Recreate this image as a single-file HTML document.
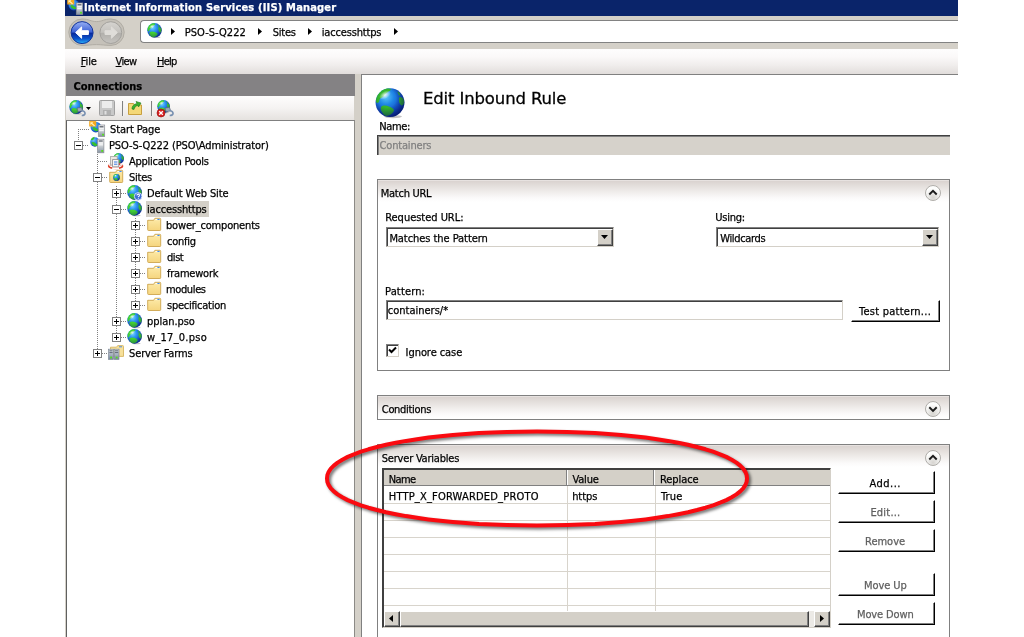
<!DOCTYPE html>
<html lang="en"><head><meta charset="utf-8"><title>Internet Information Services (IIS) Manager</title>
<style>

html,body{margin:0;padding:0;background:#fff;}
body{width:1024px;height:637px;overflow:hidden;position:relative;font-family:"DejaVu Sans Condensed","Liberation Sans",sans-serif;font-size:11px;}
.a{position:absolute;box-sizing:border-box;}
.tx{position:absolute;left:0;top:0;width:1024px;height:637px;will-change:transform;}
.t{position:absolute;white-space:pre;-webkit-text-stroke:0.25px;}
svg{position:absolute;overflow:visible;}
u{text-decoration:underline;text-underline-offset:1px;}
.hd{background:linear-gradient(#f4f1f0 0,#dad3d0 1px,#e4dfdc 6px,#f0edeb 12px,#fbfafa 18px,#fff 22px);}
.btn{background:#fff;border:1px solid #fff;border-right-color:#000;border-bottom-color:#000;box-shadow:inset -1px -1px 0 #808080;}
.sunk{border:1px solid #808080;border-right-color:#d4d0c8;border-bottom-color:#d4d0c8;box-shadow:inset 1px 1px 0 #404040;background:#fff;}
.dd{background:#d4d0c8;border:1px solid #fff;border-right-color:#404040;border-bottom-color:#404040;box-shadow:inset -1px -1px 0 #808080;}
.dv{background-image:linear-gradient(#808080 50%,transparent 50%);background-size:1px 2px;width:1px;}
.dh{background-image:linear-gradient(90deg,#808080 50%,transparent 50%);background-size:2px 1px;height:1px;}
.pm{width:9px;height:9px;border:1px solid #808080;background:#fff;}
.pm i{position:absolute;left:1px;top:3px;width:5px;height:1px;background:#000;}
.pm b{position:absolute;left:3px;top:1px;width:1px;height:5px;background:#000;}
</style></head>
<body>
<div class="a" style="left:65px;top:0px;width:893px;height:637px;background:#d4d0c8;"></div>
<div class="a" style="left:65px;top:0px;width:893px;height:16px;background:#0a246a;"></div>
<svg style="left:67px;top:-1px" width="16" height="16" viewBox="0 0 16 16"><defs><radialGradient id="g1" cx="0.35" cy="0.3" r="0.8"><stop offset="0" stop-color="#6cc8f8"/><stop offset="0.6" stop-color="#1c6ee0"/><stop offset="1" stop-color="#1038a8"/></radialGradient><linearGradient id="g1t" x1="0" y1="0" x2="0" y2="1"><stop offset="0" stop-color="#f4f4f4"/><stop offset="0.45" stop-color="#d0d4d8"/><stop offset="1" stop-color="#8492a2"/></linearGradient></defs><circle cx="6.8" cy="6.1" r="5.3" fill="url(#g1)"/><path d="M3.2 6.7 q1.6 -1.4 3.4 0 q1.8 1.6 3.2 2.2 q-1.2 1.6 -3 1.4 q-2.6 -0.6 -3.6 -3.6z M2.6 3.7 q1.2 -2.4 3.8 -2.8 q0.4 1.6 -1 2.6 q-1.2 1.4 -2.8 0.2z" fill="#36c030"/><rect x="9.3" y="4" width="6.4" height="11.6" fill="url(#g1t)" stroke="#8a8e96" stroke-width="0.7"/><rect x="10.5" y="5.3" width="4.0" height="1" fill="#3c4450"/><rect x="10.3" y="7.4" width="4.4" height="0.9" fill="#fff"/><rect x="10.3" y="9.2" width="4.4" height="0.9" fill="#fff"/><rect x="13.1" y="12.8" width="1.8" height="1.8" fill="#54e018"/><rect x="0.2" y="0.1" width="7" height="5.4" fill="#f5a81c"/><path d="M1.4 1.2 h3 l-1 1 l2.6 2.2 l-0.9 0.9 l-2.6 -2.2 l-1.1 1z" fill="#fff3c0"/></svg>
<svg style="left:68px;top:18px" width="58" height="30" viewBox="0 0 58 30">
<defs>
<linearGradient id="bk" x1="0" y1="0" x2="0" y2="1"><stop offset="0" stop-color="#98b0f4"/><stop offset="0.46" stop-color="#3f63d6"/><stop offset="0.54" stop-color="#0a2c9e"/><stop offset="0.78" stop-color="#0a54cc"/><stop offset="1" stop-color="#2cb4fa"/></linearGradient>
<linearGradient id="fw" x1="0" y1="0" x2="0" y2="1"><stop offset="0" stop-color="#d6d4d0"/><stop offset="0.48" stop-color="#c4c2be"/><stop offset="0.54" stop-color="#b2b0ac"/><stop offset="1" stop-color="#c6c4c0"/></linearGradient>
</defs>
<path d="M14 1 C21 1 23 3.6 28.5 3.6 C34 3.6 36 1 43 1 A13.2 13.2 0 0 1 43 27.4 C37 27.4 34 26.6 28.5 26.6 C23 26.6 20 27.4 14 27.4 A13.2 13.2 0 0 1 14 1Z" fill="#c5c1b9" stroke="#b0aca4" stroke-width="1"/>
<circle cx="14.1" cy="14.6" r="11" fill="url(#bk)" stroke="#12349a" stroke-width="1"/>
<path d="M7.6 14.6 L13.6 8.9 L13.6 12.7 L20.4 12.7 L20.4 16.5 L13.6 16.5 L13.6 20.3Z" fill="#fff" stroke="#fff" stroke-width="1" stroke-linejoin="round"/>
<circle cx="42.8" cy="14.6" r="10.9" fill="url(#fw)" stroke="#a3a19d" stroke-width="1"/>
<path d="M49.4 14.6 L43.4 8.9 L43.4 12.7 L37 12.7 L37 16.5 L43.4 16.5 L43.4 20.3Z" fill="#dfddd9" stroke="#dfddd9" stroke-width="1" stroke-linejoin="round"/>
</svg>
<div class="a" style="left:140px;top:20px;width:818px;height:23px;background:#fff;border:1px solid #828282;border-right:0;border-radius:4px 0 0 4px;"></div>
<svg style="left:147px;top:22.5px" width="15" height="15" viewBox="0 0 30 30"><defs><radialGradient id="g2" cx="0.36" cy="0.3" r="0.78"><stop offset="0" stop-color="#7cd8ff"/><stop offset="0.35" stop-color="#2c96f2"/><stop offset="0.7" stop-color="#1a60d8"/><stop offset="1" stop-color="#1436a8"/></radialGradient><radialGradient id="g2h" cx="0.5" cy="0.5" r="0.5"><stop offset="0" stop-color="#fff" stop-opacity="0.9"/><stop offset="1" stop-color="#fff" stop-opacity="0"/></radialGradient><radialGradient id="g2s" cx="0.4" cy="0.36" r="0.68"><stop offset="0.45" stop-color="#001060" stop-opacity="0"/><stop offset="1" stop-color="#000a50" stop-opacity="0.4"/></radialGradient><clipPath id="g2c"><circle cx="15" cy="14.6" r="14.4"/></clipPath></defs><ellipse cx="18" cy="28.6" rx="9" ry="1.6" fill="#777" opacity="0.45"/><circle cx="15" cy="14.6" r="14.4" fill="url(#g2)"/><g clip-path="url(#g2c)"><path d="M1 15 C0 9 3 3.5 8 1 C11 -0.5 15 0 17 2 C15.5 4.5 13 4.5 11.5 6.5 C10 8.5 9.5 10 7 11 C5.5 11.5 5 13.5 4.6 15.5 C3.5 17 1.8 17 1 15Z" fill="#42d232"/><path d="M5 19 C8 16 12 16.5 15.5 18 C18.5 19.4 21 20.5 21 22.6 C20.4 25.4 17 27.6 13.6 28.6 C10.6 29 8.4 28 7 25.8 C5.4 23.6 4 21.4 5 19Z" fill="#42d232"/><path d="M23.6 8 C26 7.4 28.6 9.4 29.2 12.6 C29.6 15.6 28.8 18.2 27 19 C25 19 23.4 16.4 23 14 C22.6 11.6 22.6 9.2 23.6 8Z M21.6 2.8 C23.4 3.2 25 5 25.2 7 C24.2 8.2 23 7.4 22.6 5.8 C22 4.8 21.4 3.8 21.6 2.8Z" fill="#42d232"/></g><circle cx="15" cy="14.6" r="14.4" fill="url(#g2s)"/><ellipse cx="10" cy="7" rx="6.5" ry="3.8" fill="url(#g2h)" transform="rotate(-30 10 7)"/></svg>
<svg style="left:171px;top:28px" width="4" height="7" viewBox="0 0 4 7"><path d="M0 0 L4 3.5 L0 7Z" fill="#000"/></svg>
<svg style="left:258px;top:28px" width="4" height="7" viewBox="0 0 4 7"><path d="M0 0 L4 3.5 L0 7Z" fill="#000"/></svg>
<svg style="left:308px;top:28px" width="4" height="7" viewBox="0 0 4 7"><path d="M0 0 L4 3.5 L0 7Z" fill="#000"/></svg>
<svg style="left:394px;top:28px" width="4" height="7" viewBox="0 0 4 7"><path d="M0 0 L4 3.5 L0 7Z" fill="#000"/></svg>
<div class="a" style="left:65px;top:49px;width:893px;height:25px;background:linear-gradient(#fefdfd 0,#fbf9f9 30%,#f0edec 65%,#e1dddb 100%);"></div>
<div class="a" style="left:66px;top:74px;width:289px;height:22px;background:#848284;"></div>
<div class="a" style="left:66px;top:96px;width:288px;height:24px;background:linear-gradient(#fefdfd 0,#f5f3f2 50%,#e5e2df 100%);"></div>
<div class="a" style="left:66px;top:120px;width:289px;height:517px;background:#fff;border-left:1px solid #606060;border-top:1px solid #808080;border-right:1px solid #8c8a86;"></div>
<div class="a" style="left:361px;top:74px;width:597px;height:563px;background:#fff;border-left:1px solid #808080;border-top:1px solid #808080;"></div>
<svg style="left:68.5px;top:99.7px" width="14.4" height="14.4" viewBox="0 0 30 30"><defs><radialGradient id="g3" cx="0.36" cy="0.3" r="0.78"><stop offset="0" stop-color="#7cd8ff"/><stop offset="0.35" stop-color="#2c96f2"/><stop offset="0.7" stop-color="#1a60d8"/><stop offset="1" stop-color="#1436a8"/></radialGradient><radialGradient id="g3h" cx="0.5" cy="0.5" r="0.5"><stop offset="0" stop-color="#fff" stop-opacity="0.9"/><stop offset="1" stop-color="#fff" stop-opacity="0"/></radialGradient><radialGradient id="g3s" cx="0.4" cy="0.36" r="0.68"><stop offset="0.45" stop-color="#001060" stop-opacity="0"/><stop offset="1" stop-color="#000a50" stop-opacity="0.4"/></radialGradient><clipPath id="g3c"><circle cx="15" cy="14.6" r="14.4"/></clipPath></defs><ellipse cx="18" cy="28.6" rx="9" ry="1.6" fill="#777" opacity="0.45"/><circle cx="15" cy="14.6" r="14.4" fill="url(#g3)"/><g clip-path="url(#g3c)"><path d="M1 15 C0 9 3 3.5 8 1 C11 -0.5 15 0 17 2 C15.5 4.5 13 4.5 11.5 6.5 C10 8.5 9.5 10 7 11 C5.5 11.5 5 13.5 4.6 15.5 C3.5 17 1.8 17 1 15Z" fill="#42d232"/><path d="M5 19 C8 16 12 16.5 15.5 18 C18.5 19.4 21 20.5 21 22.6 C20.4 25.4 17 27.6 13.6 28.6 C10.6 29 8.4 28 7 25.8 C5.4 23.6 4 21.4 5 19Z" fill="#42d232"/><path d="M23.6 8 C26 7.4 28.6 9.4 29.2 12.6 C29.6 15.6 28.8 18.2 27 19 C25 19 23.4 16.4 23 14 C22.6 11.6 22.6 9.2 23.6 8Z M21.6 2.8 C23.4 3.2 25 5 25.2 7 C24.2 8.2 23 7.4 22.6 5.8 C22 4.8 21.4 3.8 21.6 2.8Z" fill="#42d232"/></g><circle cx="15" cy="14.6" r="14.4" fill="url(#g3s)"/><ellipse cx="10" cy="7" rx="6.5" ry="3.8" fill="url(#g3h)" transform="rotate(-30 10 7)"/></svg>
<svg style="left:75px;top:106px" width="12" height="11" viewBox="0 0 12 11"><path d="M2 2 l4.5 -0.6 l1.2 3.4 l-4.6 1z" fill="#9aa8b8" stroke="#5c6c80" stroke-width="0.7"/><path d="M6.5 4.5 q3.5 0.5 3.6 3 q-0.4 2 -3.4 2" stroke="#7890b0" stroke-width="1.5" fill="none"/></svg>
<svg style="left:86px;top:107px" width="5" height="3" viewBox="0 0 5 3"><path d="M0 0h5l-2.5 3z" fill="#000"/></svg>
<svg style="left:99px;top:100px" width="17" height="16" viewBox="0 0 17 16"><rect x="0.5" y="0.5" width="15" height="15" rx="1" fill="#c8c8c8" stroke="#a0a0a0"/><rect x="3" y="1" width="10" height="7" fill="#ececec"/><rect x="4" y="10" width="8" height="5.5" fill="#b0b0b0"/><rect x="5.5" y="11" width="2" height="3.5" fill="#e0e0e0"/></svg>
<div class="a" style="left:122px;top:101px;width:1px;height:15px;background:#808080;"></div>
<div class="a" style="left:123px;top:101px;width:1px;height:15px;background:#f4f2f0;"></div>
<svg style="left:127px;top:100px" width="16" height="16" viewBox="0 0 16 16"><path d="M1.5 3.5 h5 l1 1.5 h7 v9.5 h-13z" fill="#f4d878" stroke="#c8a040"/><path d="M5 9 C5 5 8 4 10 3.5 L9 1.5 L14 3 L11.5 7 L10.8 5.2 C9 6 7.5 7 7 9.5Z" fill="#38b030" stroke="#1c7818" stroke-width="0.6"/></svg>
<div class="a" style="left:151px;top:101px;width:1px;height:15px;background:#808080;"></div>
<div class="a" style="left:152px;top:101px;width:1px;height:15px;background:#f4f2f0;"></div>
<svg style="left:157.3px;top:99.7px" width="13.2" height="13.2" viewBox="0 0 30 30"><defs><radialGradient id="g4" cx="0.36" cy="0.3" r="0.78"><stop offset="0" stop-color="#7cd8ff"/><stop offset="0.35" stop-color="#2c96f2"/><stop offset="0.7" stop-color="#1a60d8"/><stop offset="1" stop-color="#1436a8"/></radialGradient><radialGradient id="g4h" cx="0.5" cy="0.5" r="0.5"><stop offset="0" stop-color="#fff" stop-opacity="0.9"/><stop offset="1" stop-color="#fff" stop-opacity="0"/></radialGradient><radialGradient id="g4s" cx="0.4" cy="0.36" r="0.68"><stop offset="0.45" stop-color="#001060" stop-opacity="0"/><stop offset="1" stop-color="#000a50" stop-opacity="0.4"/></radialGradient><clipPath id="g4c"><circle cx="15" cy="14.6" r="14.4"/></clipPath></defs><ellipse cx="18" cy="28.6" rx="9" ry="1.6" fill="#777" opacity="0.45"/><circle cx="15" cy="14.6" r="14.4" fill="url(#g4)"/><g clip-path="url(#g4c)"><path d="M1 15 C0 9 3 3.5 8 1 C11 -0.5 15 0 17 2 C15.5 4.5 13 4.5 11.5 6.5 C10 8.5 9.5 10 7 11 C5.5 11.5 5 13.5 4.6 15.5 C3.5 17 1.8 17 1 15Z" fill="#42d232"/><path d="M5 19 C8 16 12 16.5 15.5 18 C18.5 19.4 21 20.5 21 22.6 C20.4 25.4 17 27.6 13.6 28.6 C10.6 29 8.4 28 7 25.8 C5.4 23.6 4 21.4 5 19Z" fill="#42d232"/><path d="M23.6 8 C26 7.4 28.6 9.4 29.2 12.6 C29.6 15.6 28.8 18.2 27 19 C25 19 23.4 16.4 23 14 C22.6 11.6 22.6 9.2 23.6 8Z M21.6 2.8 C23.4 3.2 25 5 25.2 7 C24.2 8.2 23 7.4 22.6 5.8 C22 4.8 21.4 3.8 21.6 2.8Z" fill="#42d232"/></g><circle cx="15" cy="14.6" r="14.4" fill="url(#g4s)"/><ellipse cx="10" cy="7" rx="6.5" ry="3.8" fill="url(#g4h)" transform="rotate(-30 10 7)"/></svg>
<svg style="left:156px;top:105px" width="22" height="13" viewBox="0 0 22 13"><path d="M9 3 l4.5 -0.6 l1.2 3.4 l-4.6 1z" fill="#9aa8b8" stroke="#5c6c80" stroke-width="0.7"/><path d="M13.5 5.5 q3.5 0.5 3.6 3 q-0.4 2 -3.4 2" stroke="#7890b0" stroke-width="1.5" fill="none"/><circle cx="5" cy="8" r="4" fill="#d82020" stroke="#901010" stroke-width="0.6"/><path d="M3.2 6.2 l3.6 3.6 M6.8 6.2 l-3.6 3.6" stroke="#fff" stroke-width="1.3"/></svg>
<div class="a dh" style="top:129px;left:78px;width:11px"></div>
<div class="a dv" style="left:78px;top:129px;height:12px"></div>
<div class="a dh" style="top:145px;left:83px;width:6px"></div>
<div class="a dv" style="left:97px;top:154px;height:195px"></div>
<div class="a dh" style="top:161px;left:98px;width:10px"></div>
<div class="a dh" style="top:177px;left:102px;width:6px"></div>
<div class="a dv" style="left:116px;top:186px;height:147px"></div>
<div class="a dh" style="top:193px;left:121px;width:6px"></div>
<div class="a dh" style="top:209px;left:121px;width:6px"></div>
<div class="a dh" style="top:321px;left:121px;width:6px"></div>
<div class="a dh" style="top:337px;left:121px;width:6px"></div>
<div class="a dv" style="left:135px;top:218px;height:83px"></div>
<div class="a dh" style="top:225px;left:140px;width:6px"></div>
<div class="a dh" style="top:241px;left:140px;width:6px"></div>
<div class="a dh" style="top:257px;left:140px;width:6px"></div>
<div class="a dh" style="top:273px;left:140px;width:6px"></div>
<div class="a dh" style="top:289px;left:140px;width:6px"></div>
<div class="a dh" style="top:305px;left:140px;width:6px"></div>
<div class="a dh" style="top:353px;left:102px;width:6px"></div>
<div class="a pm" style="left:74px;top:141px"><i></i></div>
<div class="a pm" style="left:93px;top:173px"><i></i></div>
<div class="a pm" style="left:112px;top:189px"><i></i><b></b></div>
<div class="a pm" style="left:112px;top:205px"><i></i></div>
<div class="a pm" style="left:112px;top:317px"><i></i><b></b></div>
<div class="a pm" style="left:112px;top:333px"><i></i><b></b></div>
<div class="a pm" style="left:131px;top:221px"><i></i><b></b></div>
<div class="a pm" style="left:131px;top:237px"><i></i><b></b></div>
<div class="a pm" style="left:131px;top:253px"><i></i><b></b></div>
<div class="a pm" style="left:131px;top:269px"><i></i><b></b></div>
<div class="a pm" style="left:131px;top:285px"><i></i><b></b></div>
<div class="a pm" style="left:131px;top:301px"><i></i><b></b></div>
<div class="a pm" style="left:93px;top:349px"><i></i><b></b></div>
<svg style="left:89px;top:121px" width="16" height="16" viewBox="0 0 16 16"><defs><radialGradient id="g5" cx="0.35" cy="0.3" r="0.8"><stop offset="0" stop-color="#6cc8f8"/><stop offset="0.6" stop-color="#1c6ee0"/><stop offset="1" stop-color="#1038a8"/></radialGradient><linearGradient id="g5t" x1="0" y1="0" x2="0" y2="1"><stop offset="0" stop-color="#f4f4f4"/><stop offset="0.45" stop-color="#d0d4d8"/><stop offset="1" stop-color="#8492a2"/></linearGradient></defs><circle cx="6.8" cy="6.1" r="5.3" fill="url(#g5)"/><path d="M3.2 6.7 q1.6 -1.4 3.4 0 q1.8 1.6 3.2 2.2 q-1.2 1.6 -3 1.4 q-2.6 -0.6 -3.6 -3.6z M2.6 3.7 q1.2 -2.4 3.8 -2.8 q0.4 1.6 -1 2.6 q-1.2 1.4 -2.8 0.2z" fill="#36c030"/><rect x="9.3" y="4" width="6.4" height="11.6" fill="url(#g5t)" stroke="#8a8e96" stroke-width="0.7"/><rect x="10.5" y="5.3" width="4.0" height="1" fill="#3c4450"/><rect x="10.3" y="7.4" width="4.4" height="0.9" fill="#fff"/><rect x="10.3" y="9.2" width="4.4" height="0.9" fill="#fff"/><rect x="13.1" y="12.8" width="1.8" height="1.8" fill="#54e018"/><rect x="0.2" y="0.1" width="7" height="5.4" fill="#f5a81c"/><path d="M1.4 1.2 h3 l-1 1 l2.6 2.2 l-0.9 0.9 l-2.6 -2.2 l-1.1 1z" fill="#fff3c0"/></svg>
<svg style="left:89px;top:137px" width="16" height="16" viewBox="0 0 16 16"><defs><radialGradient id="g6" cx="0.35" cy="0.3" r="0.8"><stop offset="0" stop-color="#6cc8f8"/><stop offset="0.6" stop-color="#1c6ee0"/><stop offset="1" stop-color="#1038a8"/></radialGradient><linearGradient id="g6t" x1="0" y1="0" x2="0" y2="1"><stop offset="0" stop-color="#f4f4f4"/><stop offset="0.45" stop-color="#d0d4d8"/><stop offset="1" stop-color="#8492a2"/></linearGradient></defs><circle cx="5.9" cy="5" r="4.7" fill="url(#g6)"/><path d="M2.3 5.6 q1.6 -1.4 3.4 0 q1.8 1.6 3.2 2.2 q-1.2 1.6 -3 1.4 q-2.6 -0.6 -3.6 -3.6z M1.7 2.6 q1.2 -2.4 3.8 -2.8 q0.4 1.6 -1 2.6 q-1.2 1.4 -2.8 0.2z" fill="#36c030"/><rect x="8.5" y="2.2" width="6.4" height="13.6" fill="url(#g6t)" stroke="#8a8e96" stroke-width="0.7"/><rect x="9.7" y="3.5" width="4.0" height="1" fill="#3c4450"/><rect x="9.5" y="5.6" width="4.4" height="0.9" fill="#fff"/><rect x="9.5" y="7.4" width="4.4" height="0.9" fill="#fff"/><rect x="12.3" y="13.0" width="1.8" height="1.8" fill="#54e018"/></svg>
<svg style="left:113.3px;top:152.8px" width="11.2" height="11.2" viewBox="0 0 30 30"><defs><radialGradient id="g7" cx="0.36" cy="0.3" r="0.78"><stop offset="0" stop-color="#7cd8ff"/><stop offset="0.35" stop-color="#2c96f2"/><stop offset="0.7" stop-color="#1a60d8"/><stop offset="1" stop-color="#1436a8"/></radialGradient><radialGradient id="g7h" cx="0.5" cy="0.5" r="0.5"><stop offset="0" stop-color="#fff" stop-opacity="0.9"/><stop offset="1" stop-color="#fff" stop-opacity="0"/></radialGradient><radialGradient id="g7s" cx="0.4" cy="0.36" r="0.68"><stop offset="0.45" stop-color="#001060" stop-opacity="0"/><stop offset="1" stop-color="#000a50" stop-opacity="0.4"/></radialGradient><clipPath id="g7c"><circle cx="15" cy="14.6" r="14.4"/></clipPath></defs><circle cx="15" cy="14.6" r="14.4" fill="url(#g7)"/><g clip-path="url(#g7c)"><path d="M1 15 C0 9 3 3.5 8 1 C11 -0.5 15 0 17 2 C15.5 4.5 13 4.5 11.5 6.5 C10 8.5 9.5 10 7 11 C5.5 11.5 5 13.5 4.6 15.5 C3.5 17 1.8 17 1 15Z" fill="#42d232"/><path d="M5 19 C8 16 12 16.5 15.5 18 C18.5 19.4 21 20.5 21 22.6 C20.4 25.4 17 27.6 13.6 28.6 C10.6 29 8.4 28 7 25.8 C5.4 23.6 4 21.4 5 19Z" fill="#42d232"/><path d="M23.6 8 C26 7.4 28.6 9.4 29.2 12.6 C29.6 15.6 28.8 18.2 27 19 C25 19 23.4 16.4 23 14 C22.6 11.6 22.6 9.2 23.6 8Z M21.6 2.8 C23.4 3.2 25 5 25.2 7 C24.2 8.2 23 7.4 22.6 5.8 C22 4.8 21.4 3.8 21.6 2.8Z" fill="#42d232"/></g><circle cx="15" cy="14.6" r="14.4" fill="url(#g7s)"/><ellipse cx="10" cy="7" rx="6.5" ry="3.8" fill="url(#g7h)" transform="rotate(-30 10 7)"/></svg>
<svg style="left:108px;top:153px" width="17" height="17" viewBox="0 0 17 17"><ellipse cx="7.6" cy="13.1" rx="6.9" ry="2.3" fill="none" stroke="#e03a22" stroke-width="1.7"/><path d="M4.2 15.1 A6.9 2.3 0 0 0 11 15.1" fill="none" stroke="#fff" stroke-width="1.7"/><path d="M0.9 12.4 A6.9 2.3 0 0 1 3 11.3 M12.2 11.3 A6.9 2.3 0 0 1 14.3 12.4" fill="none" stroke="#f4f0ee" stroke-width="1.7"/><rect x="2.6" y="3.4" width="6.6" height="8.6" fill="#ece8e2" stroke="#a4a4a4" stroke-width="0.8"/><rect x="4.6" y="6.6" width="6.2" height="7.2" fill="#f7f6f4" stroke="#8c8c90" stroke-width="0.8"/><path d="M6 9h3.4M6 11.2h3.4" stroke="#3a7ae0" stroke-width="1"/></svg>
<svg style="left:108px;top:168px" width="16" height="16" viewBox="0 0 16 16"><defs><linearGradient id="g8" x1="0" y1="0" x2="0" y2="1"><stop offset="0" stop-color="#fdebaa"/><stop offset="1" stop-color="#f5d57e"/></linearGradient></defs><path d="M1.8 4.3 h5.8 l1.3 -2 h4.9 a0.9 0.9 0 0 1 .9 .9 v10.5 a0.8 0.8 0 0 1 -.8 .8 h-11.4 a0.8 0.8 0 0 1 -.8 -.8 v-9.3 a0.4 0.4 0 0 1 .1 -.3z" fill="url(#g8)" stroke="#cda54e" stroke-width="0.9"/><rect x="9.4" y="3" width="4.4" height="1.1" fill="#fffdf4"/><rect x="11.4" y="2.9" width="2.2" height="1.1" fill="#3f8cf0"/></svg>
<svg style="left:112.6px;top:174.3px" width="7" height="7" viewBox="0 0 30 30"><defs><radialGradient id="g9" cx="0.36" cy="0.3" r="0.78"><stop offset="0" stop-color="#7cd8ff"/><stop offset="0.35" stop-color="#2c96f2"/><stop offset="0.7" stop-color="#1a60d8"/><stop offset="1" stop-color="#1436a8"/></radialGradient><radialGradient id="g9h" cx="0.5" cy="0.5" r="0.5"><stop offset="0" stop-color="#fff" stop-opacity="0.9"/><stop offset="1" stop-color="#fff" stop-opacity="0"/></radialGradient><radialGradient id="g9s" cx="0.4" cy="0.36" r="0.68"><stop offset="0.45" stop-color="#001060" stop-opacity="0"/><stop offset="1" stop-color="#000a50" stop-opacity="0.4"/></radialGradient><clipPath id="g9c"><circle cx="15" cy="14.6" r="14.4"/></clipPath></defs><circle cx="15" cy="14.6" r="14.4" fill="url(#g9)"/><g clip-path="url(#g9c)"><path d="M1 15 C0 9 3 3.5 8 1 C11 -0.5 15 0 17 2 C15.5 4.5 13 4.5 11.5 6.5 C10 8.5 9.5 10 7 11 C5.5 11.5 5 13.5 4.6 15.5 C3.5 17 1.8 17 1 15Z" fill="#42d232"/><path d="M5 19 C8 16 12 16.5 15.5 18 C18.5 19.4 21 20.5 21 22.6 C20.4 25.4 17 27.6 13.6 28.6 C10.6 29 8.4 28 7 25.8 C5.4 23.6 4 21.4 5 19Z" fill="#42d232"/><path d="M23.6 8 C26 7.4 28.6 9.4 29.2 12.6 C29.6 15.6 28.8 18.2 27 19 C25 19 23.4 16.4 23 14 C22.6 11.6 22.6 9.2 23.6 8Z M21.6 2.8 C23.4 3.2 25 5 25.2 7 C24.2 8.2 23 7.4 22.6 5.8 C22 4.8 21.4 3.8 21.6 2.8Z" fill="#42d232"/></g><circle cx="15" cy="14.6" r="14.4" fill="url(#g9s)"/><ellipse cx="10" cy="7" rx="6.5" ry="3.8" fill="url(#g9h)" transform="rotate(-30 10 7)"/></svg>
<svg style="left:127px;top:185px" width="15.2" height="15.2" viewBox="0 0 30 30"><defs><radialGradient id="g10" cx="0.36" cy="0.3" r="0.78"><stop offset="0" stop-color="#7cd8ff"/><stop offset="0.35" stop-color="#2c96f2"/><stop offset="0.7" stop-color="#1a60d8"/><stop offset="1" stop-color="#1436a8"/></radialGradient><radialGradient id="g10h" cx="0.5" cy="0.5" r="0.5"><stop offset="0" stop-color="#fff" stop-opacity="0.9"/><stop offset="1" stop-color="#fff" stop-opacity="0"/></radialGradient><radialGradient id="g10s" cx="0.4" cy="0.36" r="0.68"><stop offset="0.45" stop-color="#001060" stop-opacity="0"/><stop offset="1" stop-color="#000a50" stop-opacity="0.4"/></radialGradient><clipPath id="g10c"><circle cx="15" cy="14.6" r="14.4"/></clipPath></defs><ellipse cx="18" cy="28.6" rx="9" ry="1.6" fill="#777" opacity="0.45"/><circle cx="15" cy="14.6" r="14.4" fill="url(#g10)"/><g clip-path="url(#g10c)"><path d="M1 15 C0 9 3 3.5 8 1 C11 -0.5 15 0 17 2 C15.5 4.5 13 4.5 11.5 6.5 C10 8.5 9.5 10 7 11 C5.5 11.5 5 13.5 4.6 15.5 C3.5 17 1.8 17 1 15Z" fill="#42d232"/><path d="M5 19 C8 16 12 16.5 15.5 18 C18.5 19.4 21 20.5 21 22.6 C20.4 25.4 17 27.6 13.6 28.6 C10.6 29 8.4 28 7 25.8 C5.4 23.6 4 21.4 5 19Z" fill="#42d232"/><path d="M23.6 8 C26 7.4 28.6 9.4 29.2 12.6 C29.6 15.6 28.8 18.2 27 19 C25 19 23.4 16.4 23 14 C22.6 11.6 22.6 9.2 23.6 8Z M21.6 2.8 C23.4 3.2 25 5 25.2 7 C24.2 8.2 23 7.4 22.6 5.8 C22 4.8 21.4 3.8 21.6 2.8Z" fill="#42d232"/></g><circle cx="15" cy="14.6" r="14.4" fill="url(#g10s)"/><ellipse cx="10" cy="7" rx="6.5" ry="3.8" fill="url(#g10h)" transform="rotate(-30 10 7)"/><circle cx="22" cy="22.5" r="7.5" fill="#3b6bd6" stroke="#e8f0ff" stroke-width="1.6"/><path d="M19.6 20.6 a2.5 2.5 0 1 1 3.6 2.2 q-0.9 0.5 -0.9 1.6 M22.3 26.2 v1.4" stroke="#fff" stroke-width="2" fill="none"/></svg>
<svg style="left:127px;top:201px" width="15.2" height="15.2" viewBox="0 0 30 30"><defs><radialGradient id="g11" cx="0.36" cy="0.3" r="0.78"><stop offset="0" stop-color="#7cd8ff"/><stop offset="0.35" stop-color="#2c96f2"/><stop offset="0.7" stop-color="#1a60d8"/><stop offset="1" stop-color="#1436a8"/></radialGradient><radialGradient id="g11h" cx="0.5" cy="0.5" r="0.5"><stop offset="0" stop-color="#fff" stop-opacity="0.9"/><stop offset="1" stop-color="#fff" stop-opacity="0"/></radialGradient><radialGradient id="g11s" cx="0.4" cy="0.36" r="0.68"><stop offset="0.45" stop-color="#001060" stop-opacity="0"/><stop offset="1" stop-color="#000a50" stop-opacity="0.4"/></radialGradient><clipPath id="g11c"><circle cx="15" cy="14.6" r="14.4"/></clipPath></defs><ellipse cx="18" cy="28.6" rx="9" ry="1.6" fill="#777" opacity="0.45"/><circle cx="15" cy="14.6" r="14.4" fill="url(#g11)"/><g clip-path="url(#g11c)"><path d="M1 15 C0 9 3 3.5 8 1 C11 -0.5 15 0 17 2 C15.5 4.5 13 4.5 11.5 6.5 C10 8.5 9.5 10 7 11 C5.5 11.5 5 13.5 4.6 15.5 C3.5 17 1.8 17 1 15Z" fill="#42d232"/><path d="M5 19 C8 16 12 16.5 15.5 18 C18.5 19.4 21 20.5 21 22.6 C20.4 25.4 17 27.6 13.6 28.6 C10.6 29 8.4 28 7 25.8 C5.4 23.6 4 21.4 5 19Z" fill="#42d232"/><path d="M23.6 8 C26 7.4 28.6 9.4 29.2 12.6 C29.6 15.6 28.8 18.2 27 19 C25 19 23.4 16.4 23 14 C22.6 11.6 22.6 9.2 23.6 8Z M21.6 2.8 C23.4 3.2 25 5 25.2 7 C24.2 8.2 23 7.4 22.6 5.8 C22 4.8 21.4 3.8 21.6 2.8Z" fill="#42d232"/></g><circle cx="15" cy="14.6" r="14.4" fill="url(#g11s)"/><ellipse cx="10" cy="7" rx="6.5" ry="3.8" fill="url(#g11h)" transform="rotate(-30 10 7)"/></svg>
<svg style="left:146px;top:216px" width="16" height="16" viewBox="0 0 16 16"><defs><linearGradient id="g12" x1="0" y1="0" x2="0" y2="1"><stop offset="0" stop-color="#fdebaa"/><stop offset="1" stop-color="#f5d57e"/></linearGradient></defs><path d="M1.8 4.3 h5.8 l1.3 -2 h4.9 a0.9 0.9 0 0 1 .9 .9 v10.5 a0.8 0.8 0 0 1 -.8 .8 h-11.4 a0.8 0.8 0 0 1 -.8 -.8 v-9.3 a0.4 0.4 0 0 1 .1 -.3z" fill="url(#g12)" stroke="#cda54e" stroke-width="0.9"/><rect x="9.4" y="3" width="4.4" height="1.1" fill="#fffdf4"/><rect x="11.4" y="2.9" width="2.2" height="1.1" fill="#3f8cf0"/></svg>
<svg style="left:146px;top:232px" width="16" height="16" viewBox="0 0 16 16"><defs><linearGradient id="g13" x1="0" y1="0" x2="0" y2="1"><stop offset="0" stop-color="#fdebaa"/><stop offset="1" stop-color="#f5d57e"/></linearGradient></defs><path d="M1.8 4.3 h5.8 l1.3 -2 h4.9 a0.9 0.9 0 0 1 .9 .9 v10.5 a0.8 0.8 0 0 1 -.8 .8 h-11.4 a0.8 0.8 0 0 1 -.8 -.8 v-9.3 a0.4 0.4 0 0 1 .1 -.3z" fill="url(#g13)" stroke="#cda54e" stroke-width="0.9"/><rect x="9.4" y="3" width="4.4" height="1.1" fill="#fffdf4"/><rect x="11.4" y="2.9" width="2.2" height="1.1" fill="#3f8cf0"/></svg>
<svg style="left:146px;top:248px" width="16" height="16" viewBox="0 0 16 16"><defs><linearGradient id="g14" x1="0" y1="0" x2="0" y2="1"><stop offset="0" stop-color="#fdebaa"/><stop offset="1" stop-color="#f5d57e"/></linearGradient></defs><path d="M1.8 4.3 h5.8 l1.3 -2 h4.9 a0.9 0.9 0 0 1 .9 .9 v10.5 a0.8 0.8 0 0 1 -.8 .8 h-11.4 a0.8 0.8 0 0 1 -.8 -.8 v-9.3 a0.4 0.4 0 0 1 .1 -.3z" fill="url(#g14)" stroke="#cda54e" stroke-width="0.9"/><rect x="9.4" y="3" width="4.4" height="1.1" fill="#fffdf4"/><rect x="11.4" y="2.9" width="2.2" height="1.1" fill="#3f8cf0"/></svg>
<svg style="left:146px;top:264px" width="16" height="16" viewBox="0 0 16 16"><defs><linearGradient id="g15" x1="0" y1="0" x2="0" y2="1"><stop offset="0" stop-color="#fdebaa"/><stop offset="1" stop-color="#f5d57e"/></linearGradient></defs><path d="M1.8 4.3 h5.8 l1.3 -2 h4.9 a0.9 0.9 0 0 1 .9 .9 v10.5 a0.8 0.8 0 0 1 -.8 .8 h-11.4 a0.8 0.8 0 0 1 -.8 -.8 v-9.3 a0.4 0.4 0 0 1 .1 -.3z" fill="url(#g15)" stroke="#cda54e" stroke-width="0.9"/><rect x="9.4" y="3" width="4.4" height="1.1" fill="#fffdf4"/><rect x="11.4" y="2.9" width="2.2" height="1.1" fill="#3f8cf0"/></svg>
<svg style="left:146px;top:280px" width="16" height="16" viewBox="0 0 16 16"><defs><linearGradient id="g16" x1="0" y1="0" x2="0" y2="1"><stop offset="0" stop-color="#fdebaa"/><stop offset="1" stop-color="#f5d57e"/></linearGradient></defs><path d="M1.8 4.3 h5.8 l1.3 -2 h4.9 a0.9 0.9 0 0 1 .9 .9 v10.5 a0.8 0.8 0 0 1 -.8 .8 h-11.4 a0.8 0.8 0 0 1 -.8 -.8 v-9.3 a0.4 0.4 0 0 1 .1 -.3z" fill="url(#g16)" stroke="#cda54e" stroke-width="0.9"/><rect x="9.4" y="3" width="4.4" height="1.1" fill="#fffdf4"/><rect x="11.4" y="2.9" width="2.2" height="1.1" fill="#3f8cf0"/></svg>
<svg style="left:146px;top:296px" width="16" height="16" viewBox="0 0 16 16"><defs><linearGradient id="g17" x1="0" y1="0" x2="0" y2="1"><stop offset="0" stop-color="#fdebaa"/><stop offset="1" stop-color="#f5d57e"/></linearGradient></defs><path d="M1.8 4.3 h5.8 l1.3 -2 h4.9 a0.9 0.9 0 0 1 .9 .9 v10.5 a0.8 0.8 0 0 1 -.8 .8 h-11.4 a0.8 0.8 0 0 1 -.8 -.8 v-9.3 a0.4 0.4 0 0 1 .1 -.3z" fill="url(#g17)" stroke="#cda54e" stroke-width="0.9"/><rect x="9.4" y="3" width="4.4" height="1.1" fill="#fffdf4"/><rect x="11.4" y="2.9" width="2.2" height="1.1" fill="#3f8cf0"/></svg>
<svg style="left:127px;top:313px" width="15.2" height="15.2" viewBox="0 0 30 30"><defs><radialGradient id="g18" cx="0.36" cy="0.3" r="0.78"><stop offset="0" stop-color="#7cd8ff"/><stop offset="0.35" stop-color="#2c96f2"/><stop offset="0.7" stop-color="#1a60d8"/><stop offset="1" stop-color="#1436a8"/></radialGradient><radialGradient id="g18h" cx="0.5" cy="0.5" r="0.5"><stop offset="0" stop-color="#fff" stop-opacity="0.9"/><stop offset="1" stop-color="#fff" stop-opacity="0"/></radialGradient><radialGradient id="g18s" cx="0.4" cy="0.36" r="0.68"><stop offset="0.45" stop-color="#001060" stop-opacity="0"/><stop offset="1" stop-color="#000a50" stop-opacity="0.4"/></radialGradient><clipPath id="g18c"><circle cx="15" cy="14.6" r="14.4"/></clipPath></defs><ellipse cx="18" cy="28.6" rx="9" ry="1.6" fill="#777" opacity="0.45"/><circle cx="15" cy="14.6" r="14.4" fill="url(#g18)"/><g clip-path="url(#g18c)"><path d="M1 15 C0 9 3 3.5 8 1 C11 -0.5 15 0 17 2 C15.5 4.5 13 4.5 11.5 6.5 C10 8.5 9.5 10 7 11 C5.5 11.5 5 13.5 4.6 15.5 C3.5 17 1.8 17 1 15Z" fill="#42d232"/><path d="M5 19 C8 16 12 16.5 15.5 18 C18.5 19.4 21 20.5 21 22.6 C20.4 25.4 17 27.6 13.6 28.6 C10.6 29 8.4 28 7 25.8 C5.4 23.6 4 21.4 5 19Z" fill="#42d232"/><path d="M23.6 8 C26 7.4 28.6 9.4 29.2 12.6 C29.6 15.6 28.8 18.2 27 19 C25 19 23.4 16.4 23 14 C22.6 11.6 22.6 9.2 23.6 8Z M21.6 2.8 C23.4 3.2 25 5 25.2 7 C24.2 8.2 23 7.4 22.6 5.8 C22 4.8 21.4 3.8 21.6 2.8Z" fill="#42d232"/></g><circle cx="15" cy="14.6" r="14.4" fill="url(#g18s)"/><ellipse cx="10" cy="7" rx="6.5" ry="3.8" fill="url(#g18h)" transform="rotate(-30 10 7)"/></svg>
<svg style="left:127px;top:329px" width="15.2" height="15.2" viewBox="0 0 30 30"><defs><radialGradient id="g19" cx="0.36" cy="0.3" r="0.78"><stop offset="0" stop-color="#7cd8ff"/><stop offset="0.35" stop-color="#2c96f2"/><stop offset="0.7" stop-color="#1a60d8"/><stop offset="1" stop-color="#1436a8"/></radialGradient><radialGradient id="g19h" cx="0.5" cy="0.5" r="0.5"><stop offset="0" stop-color="#fff" stop-opacity="0.9"/><stop offset="1" stop-color="#fff" stop-opacity="0"/></radialGradient><radialGradient id="g19s" cx="0.4" cy="0.36" r="0.68"><stop offset="0.45" stop-color="#001060" stop-opacity="0"/><stop offset="1" stop-color="#000a50" stop-opacity="0.4"/></radialGradient><clipPath id="g19c"><circle cx="15" cy="14.6" r="14.4"/></clipPath></defs><ellipse cx="18" cy="28.6" rx="9" ry="1.6" fill="#777" opacity="0.45"/><circle cx="15" cy="14.6" r="14.4" fill="url(#g19)"/><g clip-path="url(#g19c)"><path d="M1 15 C0 9 3 3.5 8 1 C11 -0.5 15 0 17 2 C15.5 4.5 13 4.5 11.5 6.5 C10 8.5 9.5 10 7 11 C5.5 11.5 5 13.5 4.6 15.5 C3.5 17 1.8 17 1 15Z" fill="#42d232"/><path d="M5 19 C8 16 12 16.5 15.5 18 C18.5 19.4 21 20.5 21 22.6 C20.4 25.4 17 27.6 13.6 28.6 C10.6 29 8.4 28 7 25.8 C5.4 23.6 4 21.4 5 19Z" fill="#42d232"/><path d="M23.6 8 C26 7.4 28.6 9.4 29.2 12.6 C29.6 15.6 28.8 18.2 27 19 C25 19 23.4 16.4 23 14 C22.6 11.6 22.6 9.2 23.6 8Z M21.6 2.8 C23.4 3.2 25 5 25.2 7 C24.2 8.2 23 7.4 22.6 5.8 C22 4.8 21.4 3.8 21.6 2.8Z" fill="#42d232"/></g><circle cx="15" cy="14.6" r="14.4" fill="url(#g19s)"/><ellipse cx="10" cy="7" rx="6.5" ry="3.8" fill="url(#g19h)" transform="rotate(-30 10 7)"/></svg>
<svg style="left:108px;top:345px" width="17" height="17" viewBox="0 0 17 17"><defs><linearGradient id="sf" x1="0" y1="0" x2="0" y2="1"><stop offset="0" stop-color="#dfe4ea"/><stop offset="1" stop-color="#76869c"/></linearGradient></defs><path d="M2.5 2.2 h6 l1.2 -1.6 h5 a0.8 0.8 0 0 1 .8 .8 v10 h-13z" fill="#f7e09a" stroke="#d6b661" stroke-width="0.9"/><rect x="11" y="1.3" width="3" height="1" fill="#4f8fe0"/><rect x="0.6" y="4.2" width="4.8" height="10.2" fill="url(#sf)" stroke="#7c8896" stroke-width="0.7"/><rect x="6.2" y="4.2" width="4.8" height="10.2" fill="url(#sf)" stroke="#7c8896" stroke-width="0.7"/><path d="M1.4 5.8h3.2M1.4 7.6h3.2M7 5.8h3.2M7 7.6h3.2" stroke="#4a5260" stroke-width="0.8"/><rect x="2.2" y="11.6" width="1.8" height="1.8" fill="#54e018"/><rect x="7.8" y="11.6" width="1.8" height="1.8" fill="#54e018"/></svg>
<div class="a" style="left:146px;top:201px;width:63px;height:16px;background:#d4d0c8;"></div>
<svg style="left:375px;top:88px" width="30" height="30" viewBox="0 0 30 30"><defs><radialGradient id="g20" cx="0.36" cy="0.3" r="0.78"><stop offset="0" stop-color="#5cc8f8"/><stop offset="0.35" stop-color="#1f86e6"/><stop offset="0.7" stop-color="#1450c8"/><stop offset="1" stop-color="#0c2a94"/></radialGradient><radialGradient id="g20h" cx="0.5" cy="0.5" r="0.5"><stop offset="0" stop-color="#fff" stop-opacity="0.9"/><stop offset="1" stop-color="#fff" stop-opacity="0"/></radialGradient><radialGradient id="g20s" cx="0.4" cy="0.36" r="0.68"><stop offset="0.45" stop-color="#001060" stop-opacity="0"/><stop offset="1" stop-color="#000a50" stop-opacity="0.6"/></radialGradient><clipPath id="g20c"><circle cx="15" cy="14.6" r="14.4"/></clipPath></defs><ellipse cx="18" cy="28.6" rx="9" ry="1.6" fill="#777" opacity="0.45"/><circle cx="15" cy="14.6" r="14.4" fill="url(#g20)"/><g clip-path="url(#g20c)"><path d="M1 14 C0.5 9 3 4 7 1.5 C10 -0.5 14 -0.5 16 1.5 C15 3.5 12.5 3.8 11 5.5 C9.5 7 9 8.5 7 9.5 C5 10 4.5 11.5 4.2 13.5 C3.5 15 2 15.5 1 14Z" fill="#34b62d"/><path d="M6 19 C8 17 11 17.2 14 18.6 C16.5 19.8 19 20.6 19 22.4 C18.6 24.6 16 26.4 13.4 27.6 C11 28.4 9 27.6 8 25.6 C6.6 23.6 5.2 21.4 6 19Z" fill="#34b62d"/><path d="M24.6 9 C26.6 8.6 28.4 10 29 12.6 C29.4 15 28.6 17 27.2 17.6 C25.6 17.6 24.4 15.6 24 13.6 C23.8 11.8 23.8 10 24.6 9Z M22.6 3.6 C24 4 25.2 5.4 25.4 7 C24.6 8 23.6 7.4 23.4 6 C22.8 5.2 22.4 4.4 22.6 3.6Z" fill="#34b62d"/></g><circle cx="15" cy="14.6" r="14.4" fill="url(#g20s)"/><ellipse cx="10" cy="7" rx="6.5" ry="3.8" fill="url(#g20h)" transform="rotate(-30 10 7)"/></svg>
<div class="a" style="left:377px;top:135px;width:573px;height:20px;background:#d6d2cb;border-top:1px solid #404040;border-left:1px solid #404040;box-shadow:inset 1px 1px 0 #808080;"></div>
<div class="a" style="left:377px;top:179px;width:573px;height:192px;border:1px solid #808080;background:#fff;"></div>
<div class="a hd" style="left:378px;top:180px;width:571px;height:24px;"></div>
<svg style="left:924px;top:184px" width="18" height="18" viewBox="-9 -9 18 18"><defs><radialGradient id="cv193" cx="0.5" cy="0.8" r="0.6"><stop offset="0" stop-color="#d6d4d0"/><stop offset="1" stop-color="#fdfdfc"/></radialGradient></defs><circle r="7.5" fill="url(#cv193)" stroke="#b0aeaa" stroke-width="1"/><path d="M-3.7 1.5 L0 -2.1 L3.7 1.5" fill="none" stroke="#1c1c1c" stroke-width="1.9"/></svg>
<div class="a sunk" style="left:386px;top:227px;width:228px;height:20px;"></div>
<div class="a dd" style="left:597px;top:229px;width:16px;height:17px;"></div>
<svg style="left:601px;top:235px" width="7" height="4" viewBox="0 0 7 4"><path d="M0 0h7l-3.5 4z" fill="#000"/></svg>
<div class="a sunk" style="left:716px;top:227px;width:223px;height:20px;"></div>
<div class="a dd" style="left:922px;top:229px;width:16px;height:17px;"></div>
<svg style="left:926px;top:235px" width="7" height="4" viewBox="0 0 7 4"><path d="M0 0h7l-3.5 4z" fill="#000"/></svg>
<div class="a sunk" style="left:386px;top:300px;width:457px;height:20px;"></div>
<div class="a btn" style="left:851px;top:300px;width:89px;height:22px;"></div>
<div class="a sunk" style="left:386px;top:344px;width:13px;height:13px;"></div>
<svg style="left:388px;top:346px" width="9" height="9" viewBox="0 0 9 9"><path d="M1 3.5 L3.5 6 L8 1.5" stroke="#000" stroke-width="2" fill="none"/></svg>
<div class="a hd" style="left:377px;top:395px;width:573px;height:25px;border:1px solid #808080;"></div>
<svg style="left:924px;top:399.5px" width="18" height="18" viewBox="-9 -9 18 18"><defs><radialGradient id="cv408" cx="0.5" cy="0.8" r="0.6"><stop offset="0" stop-color="#d6d4d0"/><stop offset="1" stop-color="#fdfdfc"/></radialGradient></defs><circle r="7.5" fill="url(#cv408)" stroke="#b0aeaa" stroke-width="1"/><path d="M-3.7 -1.7 L0 1.9 L3.7 -1.7" fill="none" stroke="#1c1c1c" stroke-width="1.9"/></svg>
<div class="a" style="left:377px;top:444px;width:573px;height:200px;border:1px solid #808080;background:#fff;"></div>
<div class="a hd" style="left:378px;top:445px;width:571px;height:24px;"></div>
<svg style="left:924px;top:449px" width="18" height="18" viewBox="-9 -9 18 18"><defs><radialGradient id="cv458" cx="0.5" cy="0.8" r="0.6"><stop offset="0" stop-color="#d6d4d0"/><stop offset="1" stop-color="#fdfdfc"/></radialGradient></defs><circle r="7.5" fill="url(#cv458)" stroke="#b0aeaa" stroke-width="1"/><path d="M-3.7 1.5 L0 -2.1 L3.7 1.5" fill="none" stroke="#1c1c1c" stroke-width="1.9"/></svg>
<div class="a" style="left:382px;top:468px;width:449px;height:160px;background:#fff;border-top:1px solid #404040;border-left:1px solid #404040;border-right:1px solid #d4d0c8;border-bottom:1px solid #d4d0c8;box-shadow:inset 1px 1px 0 #404040;"></div>
<div class="a" style="left:384px;top:470px;width:446px;height:16px;background:#d4d0c8;border-bottom:1px solid #808080;"></div>
<div class="a" style="left:566px;top:470px;width:1px;height:15px;background:#808080;"></div>
<div class="a" style="left:567px;top:470px;width:1px;height:15px;background:#fff;"></div>
<div class="a" style="left:653px;top:470px;width:1px;height:15px;background:#808080;"></div>
<div class="a" style="left:654px;top:470px;width:1px;height:15px;background:#fff;"></div>
<div class="a" style="left:384px;top:503px;width:446px;height:1px;background:#d8d4cc;"></div>
<div class="a" style="left:384px;top:520px;width:446px;height:1px;background:#d8d4cc;"></div>
<div class="a" style="left:384px;top:537px;width:446px;height:1px;background:#d8d4cc;"></div>
<div class="a" style="left:384px;top:554px;width:446px;height:1px;background:#d8d4cc;"></div>
<div class="a" style="left:384px;top:571px;width:446px;height:1px;background:#d8d4cc;"></div>
<div class="a" style="left:384px;top:588px;width:446px;height:1px;background:#d8d4cc;"></div>
<div class="a" style="left:384px;top:605px;width:446px;height:1px;background:#d8d4cc;"></div>
<div class="a" style="left:567px;top:486px;width:1px;height:125px;background:#d8d4cc;"></div>
<div class="a" style="left:655px;top:486px;width:1px;height:125px;background:#d8d4cc;"></div>
<div class="a" style="left:384px;top:611px;width:446px;height:16px;background:#d4d0c8;"></div>
<div class="a dd" style="left:384px;top:611px;width:16px;height:16px;"></div>
<div class="a dd" style="left:814px;top:611px;width:16px;height:16px;"></div>
<div class="a" style="left:809px;top:611px;width:5px;height:16px;background:#eceae6;"></div>
<div class="a dd" style="left:400px;top:611px;width:409px;height:16px;"></div>
<svg style="left:389px;top:615px" width="4" height="7" viewBox="0 0 4 7"><path d="M4 0 L0 3.5 L4 7Z" fill="#000"/></svg>
<svg style="left:820px;top:615px" width="4" height="7" viewBox="0 0 4 7"><path d="M0 0 L4 3.5 L0 7Z" fill="#000"/></svg>
<div class="a btn" style="left:838px;top:471px;width:97px;height:23px;"></div>
<div class="a btn" style="left:838px;top:500px;width:97px;height:23px;"></div>
<div class="a btn" style="left:838px;top:529px;width:97px;height:23px;"></div>
<div class="a btn" style="left:838px;top:573px;width:97px;height:23px;"></div>
<div class="a btn" style="left:838px;top:602px;width:97px;height:23px;"></div>

<!-- text labels -->
<div class="tx">
<span class="t" style="left:84.00px;top:0.0px;font-size:11px;line-height:16px;color:#fff;font-weight:bold;letter-spacing:0.182px;">Internet Information Services (IIS) Manager</span>
<span class="t" style="left:184.80px;top:25.0px;font-size:11px;line-height:16px;color:#000;letter-spacing:0.010px;">PSO-S-Q222</span>
<span class="t" style="left:272.80px;top:25.0px;font-size:11px;line-height:16px;color:#000;letter-spacing:-0.270px;">Sites</span>
<span class="t" style="left:321.80px;top:25.0px;font-size:11px;line-height:16px;color:#000;letter-spacing:-0.180px;">iaccesshttps</span>
<span class="t" style="left:80.80px;top:54.0px;font-size:11px;line-height:16px;color:#000;letter-spacing:-0.150px;"><u>F</u>ile</span>
<span class="t" style="left:115.60px;top:54.0px;font-size:11px;line-height:16px;color:#000;letter-spacing:-0.630px;"><u>V</u>iew</span>
<span class="t" style="left:157.00px;top:54.0px;font-size:11px;line-height:16px;color:#000;letter-spacing:-0.750px;"><u>H</u>elp</span>
<span class="t" style="left:73.40px;top:79.0px;font-size:11px;line-height:16px;color:#000;font-weight:bold;letter-spacing:0.018px;">Connections</span>
<span class="t" style="left:110.00px;top:122.0px;font-size:11px;line-height:16px;color:#000;letter-spacing:-0.100px;">Start Page</span>
<span class="t" style="left:109.00px;top:138.0px;font-size:11px;line-height:16px;color:#000;letter-spacing:-0.093px;">PSO-S-Q222 (PSO\Administrator)</span>
<span class="t" style="left:129.00px;top:154.0px;font-size:11px;line-height:16px;color:#000;letter-spacing:-0.253px;">Application Pools</span>
<span class="t" style="left:129.00px;top:170.0px;font-size:11px;line-height:16px;color:#000;letter-spacing:-0.225px;">Sites</span>
<span class="t" style="left:147.00px;top:186.0px;font-size:11px;line-height:16px;color:#000;letter-spacing:-0.090px;">Default Web Site</span>
<span class="t" style="left:147.00px;top:202.0px;font-size:11px;line-height:16px;color:#000;letter-spacing:-0.164px;">iaccesshttps</span>
<span class="t" style="left:166.00px;top:218.0px;font-size:11px;line-height:16px;color:#000;letter-spacing:-0.180px;">bower_components</span>
<span class="t" style="left:167.00px;top:234.0px;font-size:11px;line-height:16px;color:#000;letter-spacing:-0.270px;">config</span>
<span class="t" style="left:167.00px;top:250.0px;font-size:11px;line-height:16px;color:#000;letter-spacing:-0.450px;">dist</span>
<span class="t" style="left:167.00px;top:266.0px;font-size:11px;line-height:16px;color:#000;letter-spacing:-0.225px;">framework</span>
<span class="t" style="left:166.00px;top:282.0px;font-size:11px;line-height:16px;color:#000;letter-spacing:-0.375px;">modules</span>
<span class="t" style="left:167.00px;top:298.0px;font-size:11px;line-height:16px;color:#000;letter-spacing:-0.263px;">specification</span>
<span class="t" style="left:147.00px;top:314.0px;font-size:11px;line-height:16px;color:#000;letter-spacing:-0.056px;">pplan.pso</span>
<span class="t" style="left:147.00px;top:330.0px;font-size:11px;line-height:16px;color:#000;letter-spacing:0.250px;">w_17_0.pso</span>
<span class="t" style="left:129.00px;top:346.0px;font-size:11px;line-height:16px;color:#000;letter-spacing:-0.123px;">Server Farms</span>
<span class="t" style="left:423.00px;top:87.0px;font-size:16.5px;line-height:24px;color:#000;letter-spacing:-0.141px;font-family:'DejaVu Sans','Liberation Sans',sans-serif;-webkit-text-stroke:0.28px;">Edit Inbound Rule</span>
<span class="t" style="left:379.20px;top:119.0px;font-size:11px;line-height:16px;color:#000;letter-spacing:-0.360px;">Name:</span>
<span class="t" style="left:379.60px;top:138.0px;font-size:11px;line-height:16px;color:#808080;letter-spacing:-0.180px;">Containers</span>
<span class="t" style="left:380.80px;top:186.0px;font-size:11px;line-height:16px;color:#000;letter-spacing:-0.270px;">Match URL</span>
<span class="t" style="left:385.20px;top:210.0px;font-size:11px;line-height:16px;color:#000;letter-spacing:-0.021px;">Requested URL:</span>
<span class="t" style="left:389.40px;top:231.0px;font-size:11px;line-height:16px;color:#000;letter-spacing:-0.060px;">Matches the Pattern</span>
<span class="t" style="left:715.20px;top:210.0px;font-size:11px;line-height:16px;color:#000;letter-spacing:-0.216px;">Using:</span>
<span class="t" style="left:720.20px;top:231.0px;font-size:11px;line-height:16px;color:#000;letter-spacing:-0.338px;">Wildcards</span>
<span class="t" style="left:385.00px;top:284.0px;font-size:11px;line-height:16px;color:#000;letter-spacing:0.154px;">Pattern:</span>
<span class="t" style="left:387.80px;top:303.0px;font-size:11px;line-height:16px;color:#000;">containers/*</span>
<span class="t" style="left:859.00px;top:304.0px;font-size:11px;line-height:16px;color:#000;letter-spacing:0.257px;">Test pattern...</span>
<span class="t" style="left:405.60px;top:345.0px;font-size:11px;line-height:16px;color:#000;letter-spacing:-0.063px;">Ignore case</span>
<span class="t" style="left:381.80px;top:402.0px;font-size:11px;line-height:16px;color:#000;letter-spacing:-0.320px;">Conditions</span>
<span class="t" style="left:381.80px;top:451.0px;font-size:11px;line-height:16px;color:#000;letter-spacing:-0.210px;">Server Variables</span>
<span class="t" style="left:388.80px;top:472.0px;font-size:11px;line-height:16px;color:#000;letter-spacing:-0.630px;">Name</span>
<span class="t" style="left:572.60px;top:472.0px;font-size:11px;line-height:16px;color:#000;letter-spacing:-0.225px;">Value</span>
<span class="t" style="left:660.00px;top:472.0px;font-size:11px;line-height:16px;color:#000;letter-spacing:-0.075px;">Replace</span>
<span class="t" style="left:388.80px;top:489.0px;font-size:11px;line-height:16px;color:#000;letter-spacing:0.193px;">HTTP_X_FORWARDED_PROTO</span>
<span class="t" style="left:572.20px;top:489.0px;font-size:11px;line-height:16px;color:#000;letter-spacing:-0.090px;">https</span>
<span class="t" style="left:661.00px;top:489.0px;font-size:11px;line-height:16px;color:#000;letter-spacing:0.150px;">True</span>
<span class="t" style="left:869.60px;top:476.0px;font-size:11px;line-height:16px;color:#000;letter-spacing:0.450px;">Add...</span>
<span class="t" style="left:870.40px;top:505.0px;font-size:11px;line-height:16px;color:#606060;letter-spacing:0.210px;">Edit...</span>
<span class="t" style="left:865.00px;top:534.0px;font-size:11px;line-height:16px;color:#606060;">Remove</span>
<span class="t" style="left:864.00px;top:578.0px;font-size:11px;line-height:16px;color:#606060;letter-spacing:-0.075px;">Move Up</span>
<span class="t" style="left:857.00px;top:607.0px;font-size:11px;line-height:16px;color:#606060;letter-spacing:-0.113px;">Move Down</span>
</div>
<svg style="left:315px;top:420px;filter:drop-shadow(2px 2px 1.5px rgba(0,0,0,0.55));" width="450" height="120" viewBox="315 420 450 120"><path d="M747.0 478.5 L746.6 482.0 L745.3 485.2 L743.2 488.4 L740.2 491.4 L736.4 494.4 L731.7 497.3 L726.3 500.1 L720.1 502.7 L713.1 505.3 L705.5 507.7 L697.0 510.0 L688.0 512.2 L678.2 514.2 L667.9 516.1 L657.0 517.8 L645.5 519.4 L633.6 520.8 L621.1 522.0 L608.3 523.0 L595.0 523.9 L581.3 524.5 L567.2 525.0 L552.6 525.3 L537.0 525.4 L521.4 525.3 L506.8 525.0 L492.7 524.5 L479.0 523.9 L465.7 523.0 L452.9 522.0 L440.4 520.8 L428.5 519.4 L417.0 517.8 L406.1 516.1 L395.8 514.2 L386.0 512.2 L377.0 510.0 L368.5 507.7 L360.9 505.3 L353.9 502.7 L347.7 500.1 L342.3 497.3 L337.6 494.4 L333.8 491.4 L330.8 488.4 L328.7 485.2 L327.4 482.0 L327.0 478.5 L327.4 475.0 L328.7 471.8 L330.8 468.6 L333.8 465.6 L337.6 462.6 L342.3 459.7 L347.7 456.9 L353.9 454.3 L360.9 451.7 L368.5 449.3 L377.0 447.0 L386.0 444.8 L395.8 442.8 L406.1 440.9 L417.0 439.2 L428.5 437.6 L440.4 436.2 L452.9 435.0 L465.7 434.0 L479.0 433.1 L492.7 432.5 L506.8 432.0 L521.4 431.7 L537.0 431.6 L552.6 431.7 L567.2 432.0 L581.3 432.5 L595.0 433.1 L608.3 434.0 L621.1 435.0 L633.6 436.2 L645.5 437.6 L657.0 439.2 L667.9 440.9 L678.2 442.8 L688.0 444.8 L697.0 447.0 L705.5 449.3 L713.1 451.7 L720.1 454.3 L726.3 456.9 L731.7 459.7 L736.4 462.6 L740.2 465.6 L743.2 468.6 L745.3 471.8 L746.6 475.0Z" fill="none" stroke="#fa0a10" stroke-width="4" stroke-linejoin="round"/></svg>
</body></html>
